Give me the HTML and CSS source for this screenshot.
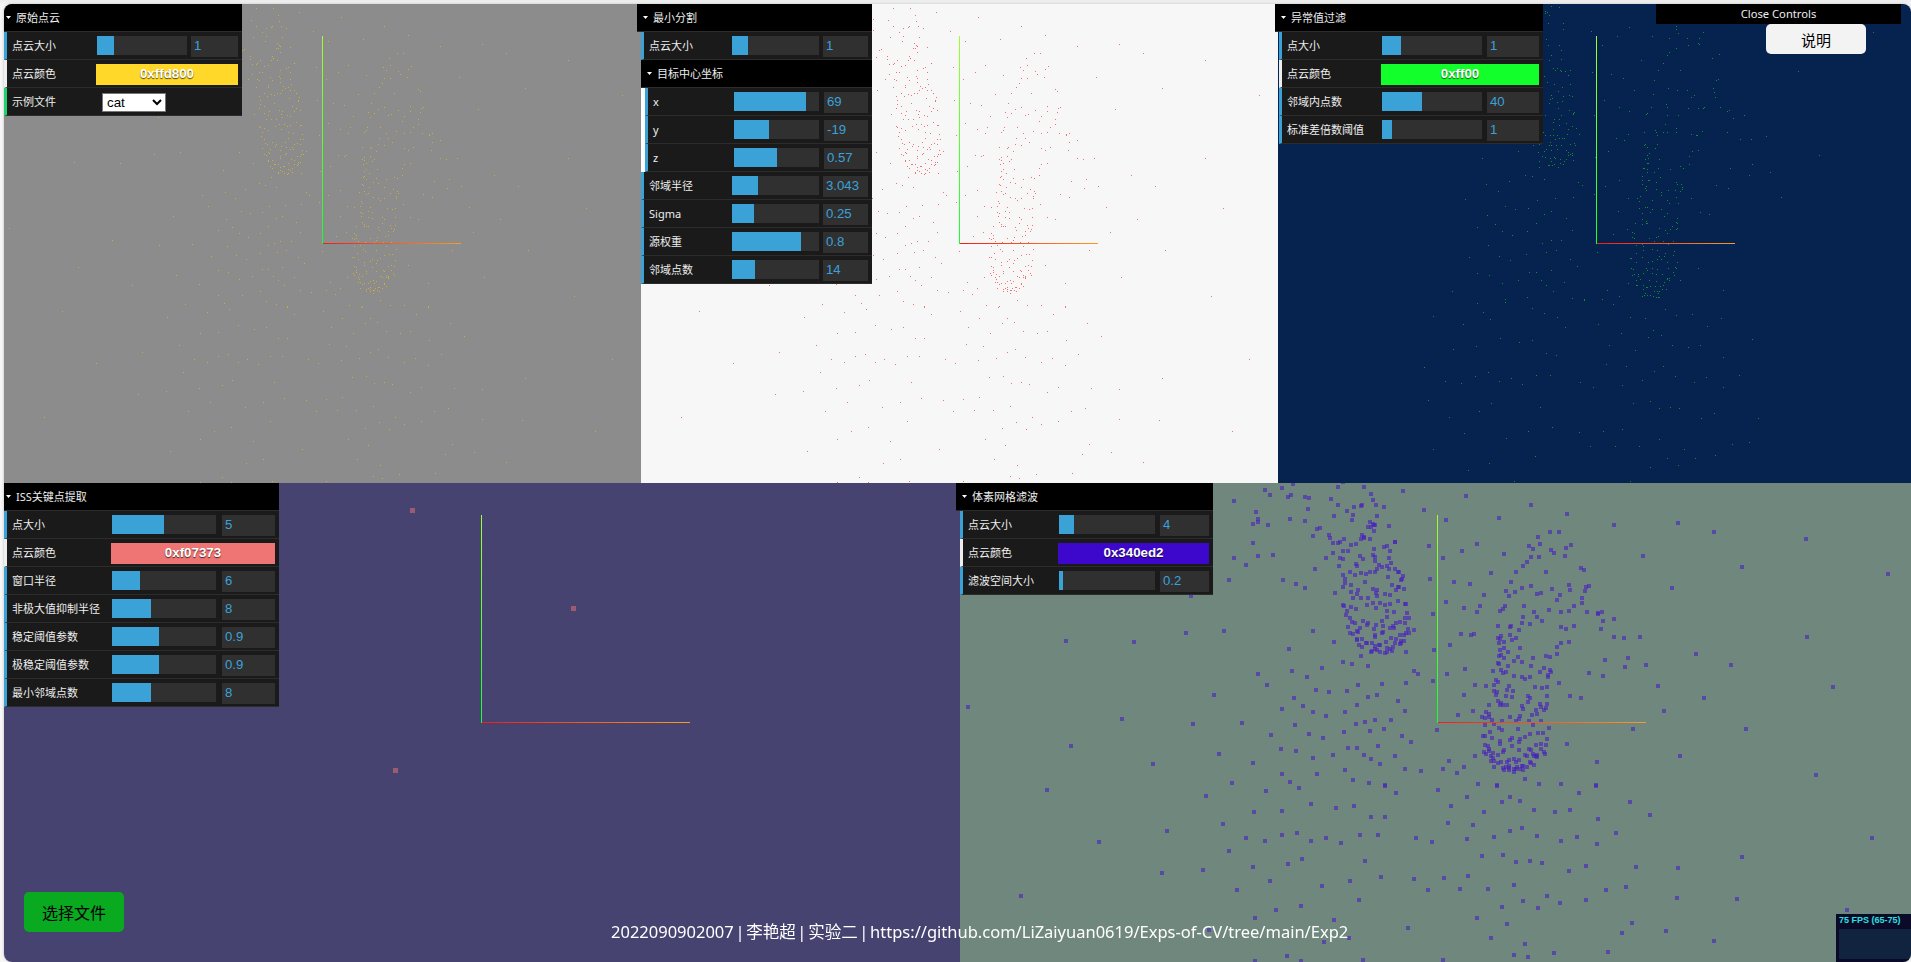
FILE: index.html
```html
<!DOCTYPE html>
<html lang="zh-CN">
<head>
<meta charset="utf-8">
<title>点云处理</title>
<link rel="stylesheet" href="styles.css">
</head>
<body>
<main class="stage">
  <div class="views top">
    <section class="view view-origin">
      <canvas id="origin" width="637" height="479"></canvas>
      <div class="gui gui-origin">
        <h2 class="title">原始点云</h2>
        <ul class="rows">
          <li class="row"><span class="name">点云大小</span><div class="slider"><div class="fill" style="width:18.9%"></div></div><span class="value">1</span></li>
          <li class="row color"><span class="name">点云颜色</span><span class="swatch yellow">0xffd800</span></li>
          <li class="row option"><span class="name">示例文件</span><select class="select"><option>cat</option></select></li>
        </ul>
      </div>
    </section>
    <section class="view view-cut">
      <canvas id="cut" width="637" height="479"></canvas>
      <div class="gui gui-cut">
        <h2 class="title">最小分割</h2>
        <ul class="rows">
          <li class="row"><span class="name">点云大小</span><div class="slider"><div class="fill" style="width:18.4%"></div></div><span class="value">1</span></li>
          <li class="folder">
            <h3 class="title sub">目标中心坐标</h3>
            <ul class="nested">
              <li class="row"><span class="name">x</span><div class="slider"><div class="fill" style="width:84.5%"></div></div><span class="value">69</span></li>
              <li class="row"><span class="name">y</span><div class="slider"><div class="fill" style="width:41%"></div></div><span class="value">-19</span></li>
              <li class="row"><span class="name">z</span><div class="slider"><div class="fill" style="width:50.5%"></div></div><span class="value">0.57</span></li>
            </ul>
          </li>
          <li class="row"><span class="name">邻域半径</span><div class="slider"><div class="fill" style="width:30.4%"></div></div><span class="value">3.043</span></li>
          <li class="row"><span class="name">Sigma</span><div class="slider"><div class="fill" style="width:25.2%"></div></div><span class="value">0.25</span></li>
          <li class="row"><span class="name">源权重</span><div class="slider"><div class="fill" style="width:79.3%"></div></div><span class="value">0.8</span></li>
          <li class="row"><span class="name">邻域点数</span><div class="slider"><div class="fill" style="width:26.5%"></div></div><span class="value">14</span></li>
        </ul>
      </div>
    </section>
    <section class="view view-outlier">
      <canvas id="outlier" width="637" height="479"></canvas>
      <div class="gui gui-outlier">
        <h2 class="title">异常值过滤</h2>
        <ul class="rows">
          <li class="row"><span class="name">点大小</span><div class="slider"><div class="fill" style="width:19%"></div></div><span class="value">1</span></li>
          <li class="row color"><span class="name">点云颜色</span><span class="swatch green">0xff00</span></li>
          <li class="row"><span class="name">邻域内点数</span><div class="slider"><div class="fill" style="width:40%"></div></div><span class="value">40</span></li>
          <li class="row"><span class="name">标准差倍数阈值</span><div class="slider"><div class="fill" style="width:10%"></div></div><span class="value">1</span></li>
        </ul>
      </div>
    </section>
  </div>
  <div class="views bottom">
    <section class="view view-iss">
      <canvas id="iss" width="956" height="479"></canvas>
      <div class="gui gui-iss">
        <h2 class="title">ISS关键点提取</h2>
        <ul class="rows">
          <li class="row"><span class="name">点大小</span><div class="slider"><div class="fill" style="width:50%"></div></div><span class="value">5</span></li>
          <li class="row color"><span class="name">点云颜色</span><span class="swatch pink">0xf07373</span></li>
          <li class="row"><span class="name">窗口半径</span><div class="slider"><div class="fill" style="width:27%"></div></div><span class="value">6</span></li>
          <li class="row"><span class="name">非极大值抑制半径</span><div class="slider"><div class="fill" style="width:37.5%"></div></div><span class="value">8</span></li>
          <li class="row"><span class="name">稳定阈值参数</span><div class="slider"><div class="fill" style="width:45.2%"></div></div><span class="value">0.9</span></li>
          <li class="row"><span class="name">极稳定阈值参数</span><div class="slider"><div class="fill" style="width:45.2%"></div></div><span class="value">0.9</span></li>
          <li class="row"><span class="name">最小邻域点数</span><div class="slider"><div class="fill" style="width:37.5%"></div></div><span class="value">8</span></li>
        </ul>
      </div>
    </section>
    <section class="view view-voxel">
      <canvas id="voxel" width="956" height="479"></canvas>
      <div class="gui gui-voxel">
        <h2 class="title">体素网格滤波</h2>
        <ul class="rows">
          <li class="row"><span class="name">点云大小</span><div class="slider"><div class="fill" style="width:15.6%"></div></div><span class="value">4</span></li>
          <li class="row color"><span class="name">点云颜色</span><span class="swatch violet">0x340ed2</span></li>
          <li class="row"><span class="name">滤波空间大小</span><div class="slider"><div class="fill" style="width:4.2%"></div></div><span class="value">0.2</span></li>
        </ul>
      </div>
    </section>
  </div>
  <div class="close-controls">Close Controls</div>
  <button class="help">说明</button>
  <button class="pick">选择文件</button>
  <p class="credit">2022090902007 | 李艳超 | 实验二 | https://github.com/LiZaiyuan0619/Exps-of-CV/tree/main/Exp2</p>
  <div class="stats"><div class="fps">75 FPS (65-75)</div><div class="graph"></div></div>
</main>
<script src="clouds.js"></script>
</body>
</html>
```
FILE: styles.css
```css
* { box-sizing: border-box; }

body {
  margin: 0;
  width: 1911px;
  height: 962px;
  padding: 4px 0 0 4px;
  overflow: hidden;
  background: #f7f7f7 linear-gradient(#ececec, #f5f5f5) 0 0 / 100% 4px no-repeat;
  font-family: "Noto Sans", "Noto Sans CJK SC", sans-serif;
}

h2, h3, ul, p { margin: 0; padding: 0; font-weight: 400; }
ul { list-style: none; }

.stage {
  position: relative;
  width: 1907px;
  height: 958px;
  overflow: hidden;
  border-radius: 8px;
  box-shadow: 0 0 3px rgba(0, 0, 0, .25);
}

.views { display: flex; height: 479px; }
.view { position: relative; flex: none; height: 479px; }
.view canvas { display: block; }
.top .view { width: 637px; }
.bottom .view { width: 956px; }

.view-origin { background: #8c8c8c; }
.view-cut { background: #f7f7f7; }
.view-outlier { background: #06224f; }
.view-iss { background: #474370; }
.view-voxel { background: #70877e; }

/* control panels */
.gui {
  position: absolute;
  top: 0;
  left: -4px;
  z-index: 1;
  font-size: 11px;
  line-height: 27px;
  color: #eee;
}

.gui-origin { width: 242px; --name: 85px; --slider: 90px; --gap: 4px; }
.gui-cut { width: 235px; --name: 83px; --slider: 87px; --gap: 4px; }
.gui-outlier { left: -3px; width: 268px; --name: 95px; --slider: 100px; --gap: 5px; }
.gui-iss { width: 279px; --name: 100px; --slider: 104px; --gap: 6px; }
.gui-voxel { width: 257px; --name: 91px; --slider: 96px; --gap: 5px; }

.title {
  height: 28px;
  padding-left: 16px;
  border-bottom: 1px solid #2c2c2c;
  background: #000 url("data:image/svg+xml,%3Csvg xmlns='http://www.w3.org/2000/svg' width='5' height='3'%3E%3Cpath d='M0 0h5L2.5 3z' fill='%23fff'/%3E%3C/svg%3E") 6px 12px no-repeat;
  font-size: 11px;
  line-height: 27px;
  white-space: nowrap;
}

.rows { margin-left: 4px; }

.row {
  display: flex;
  height: 28px;
  padding: 0 4px 0 5px;
  border-left: 3px solid #3ba2d8;
  border-bottom: 1px solid #2c2c2c;
  background: #1a1a1a;
}

.row.color { border-left-color: #eee; }
.row.option { border-left-color: #1ed36f; }

.name { flex: none; width: var(--name); white-space: nowrap; }

.slider {
  flex: none;
  width: var(--slider);
  height: 19px;
  margin: 4px var(--gap) 0 0;
  background: #303030;
}

.fill { height: 100%; background: #3ba2d8; }

.value {
  flex: 1;
  height: 21px;
  margin-top: 4px;
  padding-left: 3px;
  background: #303030;
  color: #3ba2d8;
  font: 13.2px/20px "Liberation Sans", sans-serif;
}

.swatch {
  flex: 1;
  height: 21px;
  margin: 4px 0 0 -1px;
  color: #fff;
  font: bold 13.33px/20px "Liberation Sans", sans-serif;
  text-align: center;
  text-shadow: 0 1px 1px rgba(0, 0, 0, .7);
}

.yellow { background: #ffd829; }
.green { background: #13ff2b; }
.pink { background: #ef7474; }
.violet { background: #3d08cb; }

.select {
  width: 64px;
  height: 19px;
  margin: 5px 0 0 5px;
  padding: 0;
  border: 1px solid #767676;
  border-radius: 0;
  background: #fff;
  color: #000;
  font: 13.33px "Liberation Sans", sans-serif;
}

.title.sub { background-position: 6px 12px; }
.nested { border-left: 4px solid #fff; --name: 81px; --slider: 85px; --gap: 5px; }

/* floating controls */
.close-controls {
  position: absolute;
  top: 0;
  left: 1652px;
  width: 245px;
  height: 20px;
  background: #000;
  color: #eee;
  font-size: 11.2px;
  line-height: 20px;
  text-align: center;
}

.help, .pick {
  position: absolute;
  width: 100px;
  padding: 0;
  border: 0;
  border-radius: 5px;
  color: #000;
  font-family: "Noto Sans CJK SC", sans-serif;
}

.help { top: 20px; left: 1762px; height: 30px; background: #f3f3f3; font-size: 15px; }
.pick { top: 888px; left: 20px; height: 40px; background: #09a920; font-size: 16px; }

.credit {
  position: absolute;
  left: 607px;
  top: 916px;
  color: #fff;
  font-size: 16.5px;
  line-height: 24px;
  word-spacing: -2.6px;
  white-space: nowrap;
}

.stats {
  position: absolute;
  top: 910px;
  left: 1832px;
  width: 80px;
  height: 48px;
  padding: 0 3px;
  background: #0b0b29;
}

.fps {
  height: 15px;
  color: #2be0e0;
  font: bold 9px/13px "Liberation Sans", sans-serif;
  white-space: nowrap;
}

.graph { height: 30px; background: #10243f; }
```
FILE: clouds.js
```js
// Each tile holds points in a local grid: [origin x, origin y, units per px in x, units per px in y, points].
const catTiles = [
  [950, 475, 3, 3, `945,45 960,60 996,39 1029,27 1023,60 1014,66 1065,66 1077,69 1164,36 1179,21 1242,36 1263,57 1269,75 1143,72 1164,90 1191,108 1212,96 1233,93 1236,90 1278,90 1302,96 852,78 918,111 924,132 924,141 909,147 954,150 1020,132 1074,102 1065,138 1101,162 1110,159 1089,183 1152,123 1209,120 1206,135 1281,123 1260,141 1254,156 1263,156 1269,147 1272,150 1275,150 1272,168 1317,153 1137,180 1140,189 1149,204 1164,204 1170,201 1182,192 1203,210 1218,207 1236,180 1242,186 1242,188 1233,192 1260,192 1335,201 1335,201 1302,216 1311,213 1320,228 1272,222 909,204 924,243 969,240 852,249 888,270 837,315 999,315 1038,327 1065,339 1095,282 1128,249 1149,234 1170,249 1179,252 1179,228 1194,228 1167,273 1230,243 1239,252 1269,240 1275,246 1275,258 1317,249 1323,264 1218,267 1221,273 1287,270 1296,276 1311,273 1317,282 1335,282 1281,282 1275,291 1260,291 1248,297 1233,294 1215,300 1200,291 1179,300 1185,312 1185,324 1179,336 1203,330 1245,321 1314,306 1347,291 1326,330 1338,345 1347,336 1269,342 1281,345 1278,354 1281,363 1305,357 1320,360 1224,345 1203,351 1221,357 1209,369 1233,369 1254,369 1155,354 1269,384 1290,384 1251,390 1278,399 1305,390 1320,387 1179,390 1182,393 1203,396 1191,408 1218,402 1188,420 1200,429 1311,408 1332,411 1311,426 1206,441 1215,444 1239,438 1251,450 1254,444 1278,450 1296,438 1299,453 1272,462 1320,459 1329,453 1332,459 1338,444 1194,456 1200,474 1209,477 1221,468 1224,471 1230,459 1296,474 1299,471 1275,480 1275,486 1221,492 1221,495 1236,492 1323,489 1338,492 1308,501 1335,504 1227,510 1236,516 1248,504 1251,504 1266,504 1275,513 1290,510 1287,510 1311,519 1329,516 1263,531 1266,528 1275,522 1281,525 1290,531 1305,534 1311,531 1320,522 1326,528 1233,543
  348,498 552,501 708,474 723,363 822,468 1017,522 1089,468 1152,501 1179,561 1206,567 1254,573 1026,588 1071,606 1116,579 924,597 951,630 1098,645 1137,651 1191,648 1224,630 1296,627 1254,666 1281,660 1344,678 792,660 1032,669 996,702 1059,693 1089,711 1128,723 1185,711 1221,690 54,696 516,732 729,747 876,744 963,780 1035,750 1077,777 1119,789 1182,771 1218,747 1245,741 1275,735 1323,735 1260,768 1302,762 363,813 609,867 807,837 909,864 993,822 1038,828 1089,849 1149,840 1194,819 1221,819 1242,840 1263,852 1284,813 1335,843 1290,867 846,924 996,897 1020,921 1101,897 1185,885 1209,915 1257,924 1305,931`],
  [1400, 475, 3, 3, `9,48 72,105 138,135 198,63 297,129 393,90 501,117 642,150 834,144 942,171 1218,192 1464,297 1026,276 729,243 816,339 888,537 993,570 1221,486 1299,636 912,669 774,633 792,708 1038,762 840,843 1248,900 699,762 738,570 684,549 675,576 615,555 609,603 567,594 543,669 510,663 720,486 672,489 642,486 642,432 609,438 603,462 606,411 594,414 594,417 561,411 546,384 546,369 555,348 558,336 567,333 552,285 543,279 495,243 498,219 513,210 462,234 453,225 450,171 477,171 414,186 420,207 387,213 399,222 393,246 417,246 381,261 369,273 348,291 438,291 333,321 312,237 273,294 231,207 186,228 129,249 87,213 90,312 162,321 210,327 252,360 138,381 192,399 240,393 231,411 99,417 183,477 213,480 222,477 150,510 102,525 195,582 141,597 99,618 225,630 258,633 192,660 219,708 174,720 111,765 42,465 42,588 54,597 18,624 18,531 15,708 6,783 33,801 15,882 63,888 129,882 147,858 171,894 192,876 225,843 234,927 -6,291 9,303 3,315 6,312 -6,336 12,342 -6,378 15,387 18,387 21,414 15,429 27,429 0,441 15,444 24,462 18,474 27,474 12,480 0,480 12,498 3,504 0,507 3,498
  318,348 327,363 345,351 366,339 393,333 411,357 423,354 456,342 480,360 471,375 507,330 510,345 372,393 402,411 411,426 426,438 447,405 483,411 507,408 522,393 315,393 309,402 300,408 369,426 366,444 390,447 294,453 330,456 333,453 357,465 522,453 483,456 498,462 330,480 303,483 294,489 300,492 297,504 312,501 336,495 348,489 483,504 507,501 471,516 360,519 312,519 300,525 324,531 471,537 438,543 450,546 297,543 303,540 312,549 354,546 342,558 366,561 399,549 294,564 297,567 324,573 393,573 432,579 450,585 453,591 420,591 279,588 303,585 309,594 318,591 444,600 444,606 342,603 366,606 375,612 390,606 288,615 294,621 477,624 282,630 327,633 405,636 426,639 441,636 282,648 291,651 288,660 321,645 339,648 318,663 336,666 384,663 390,669 384,681 441,663 294,678 303,684 300,690 309,690 321,690 267,690 420,687 423,696 441,687 438,699 432,705 408,705 411,717 366,693 369,702 396,720 258,711 267,717 267,726 246,726 255,729 276,735 330,726 306,738 348,738 357,732 360,723 387,738 423,738
  255,750 282,747 297,759 306,765 399,750 354,762 447,759 270,771 414,774 429,774 390,777 249,783 255,783 276,789 375,786 360,792 357,801 336,789 330,795 300,798 300,807 441,792 438,810 423,807 408,810 423,822 336,813 357,825 255,810 264,813 267,822 267,828 252,831 258,837 312,825 309,831 279,834 273,843 279,849 294,840 387,822 393,825 399,837 432,831 435,837 375,840 381,843 402,843 408,843 411,840 411,846 327,855 342,852 357,855 348,861 321,861 303,861 294,864 273,858 282,858 390,861 393,864 402,870 282,876 318,876 327,873 327,879 309,879 312,885 327,885 342,882 351,876 360,882 369,873 366,873 369,885 381,876 348,882 342,891 375,912 417,927 483,927 291,931 588,931 501,807 591,861`],
  [950, 740, 1.6316, 3, `158,150 417,168 515,153 569,144 727,159 709,138 797,150 844,171 892,138 913,171 900,186 930,183 1026,159 1054,138 1109,186 1142,225 589,192 630,204 659,198 817,198 872,216 953,210 987,216 1011,210 496,216 542,213 687,231 710,231 445,252 354,273 243,306 483,294 514,303 542,285 566,279 589,303 613,294 638,309 669,285 698,285 812,249 853,255 760,294 786,306 843,297 887,291 913,273 933,264 958,288 997,303 1023,291 1055,312 1057,237 1086,279 1504,294 1292,351 455,333 677,363 575,357 551,372 494,381 413,390 346,399 522,423 468,450 116,468 607,438 652,423 703,411 757,417 780,450 806,414 832,447 845,408 868,348 902,345 923,366 946,363 966,369 878,447 920,435 974,468 935,483 900,501 959,504 995,489 1010,393 1037,378 1119,381 1188,384 1103,441 1070,450 1037,480 1186,474 1284,477 1463,510 667,480 572,498 532,510 497,534 626,540 747,564 860,534 909,552 1113,549 1096,579 1168,573 1246,603 423,570 651,594 610,606 882,594 938,612 920,645 943,651 985,639 1073,636 550,648 497,664 572,664 674,661 804,661`]
];

const filteredTiles = [
  [1400, 0, 3, 3, `454,18 478,21 436,33 436,40 442,38 448,45 445,70 490,70 490,87 574,94 439,118 445,136 478,136 484,151 454,166 448,181 484,178 460,205 466,211 472,205 481,211 484,214 496,214 511,211 505,226 433,229 442,247 463,253 511,253 487,262 475,274 454,286 457,295 451,298 490,289 508,286 517,289 448,310 472,307 487,304 475,325 508,331 523,337 520,340 520,343 436,346 484,346 463,358 478,358 460,367 478,376 499,370 517,379 529,385 505,388 460,388 538,403 502,403 430,397 436,406 451,406 460,406 472,406 478,415 487,415 493,415 466,418 451,427 454,436 400,436 418,433 448,436 469,436 484,436 511,433 523,430 526,436 472,448 454,451 439,448 499,451 505,457 415,457 433,454 505,466 511,463 517,460 517,466 427,469 436,472 451,475 463,472 466,475 418,484 454,484 481,478 499,478 520,481 493,484 481,490 490,493 463,493 457,496 445,496 448,496 475,502 418,502
  607,136 652,109 688,82 757,109 829,79 829,87 835,100 808,115 862,115 898,115 910,97 865,136 895,130 898,133 829,145 808,157 802,166 790,190 841,211 958,163 937,175 724,181 634,223 670,235 577,217 763,241 774,211 955,238 949,241 940,265 943,277 946,292 703,271 613,301 583,346 805,265 832,271 862,271 883,286 874,292 760,283 799,313 802,322 754,322 658,322 688,334 742,340 739,343 802,346 835,346 865,325 895,325 910,325 913,322 961,322 982,334 988,331 1000,355 1033,346 796,373 829,385 829,397 766,391 769,397 790,397 802,397 733,397 685,403 649,415 673,421 625,454 586,472 772,406 892,406 907,394 874,403 889,406 982,397 1021,418 1054,418 1099,409 736,433 733,436 742,442 772,433 766,445 748,460 742,466 736,478 745,475 778,478 742,490 745,490 742,508 742,517 733,505 730,505 775,505 811,508 850,505 841,499 868,493 868,469 877,454 895,451 991,505 1057,493 1048,526 1111,517 1144,592 1258,466 1195,214 1420,97 763,517 781,532 727,529 727,541 745,541 748,541 769,547 739,559 727,553 736,565 739,571 769,568 805,571 784,577 784,586 829,547 832,553 844,553 847,562 847,568 841,574 826,571 829,592 874,595 901,637 928,643 985,565 949,556 721,589 712,595 718,604 757,601 802,601 808,610 835,610 718,625 736,622 742,622 751,637 757,628 784,628 802,640 727,640 727,658 739,664 742,670 739,670 706,670 727,673 793,649 832,655 829,667 832,670 817,679 832,685 829,688 811,688 796,691 778,685 802,700 775,709 769,712 763,724 748,715 790,724 820,724 682,688 697,697 703,700 697,712 703,715 709,736 727,733 730,739 730,751 757,748 772,751 805,733 823,754 796,760 793,769 820,766 709,760 691,775 694,775 727,772 778,769 772,778 784,778 832,787 745,787 757,784 709,787 802,787 826,802 829,805 805,805 739,805 757,805 742,811 694,805 700,808 772,808 730,820 757,820 697,826 703,823 715,823 715,829 769,823 787,823 820,817 823,826 802,835 808,835 808,841 802,838 841,841 709,841 721,838 748,841 769,844 793,847 685,850 709,856 712,856 730,856 739,862 742,862 751,859 766,859 781,859 790,856 730,868 787,868 799,868 763,874 772,874 778,874 775,880 736,880 727,889 733,886 742,886 751,886 760,889 769,892 775,892 778,892 895,805 970,871
  247,475 355,454 376,526 397,529 433,538 328,544 259,553 295,574 196,598 316,619 346,628 385,625 412,601 466,595 520,592 535,547 547,556 583,583 616,559 658,541 685,595 655,634 640,703 592,757 433,643 454,634 499,655 409,670 262,646 286,673 232,682 307,694 337,706 382,694 427,730 454,721 484,721 517,691 265,736 298,769 331,781 379,763 439,757 469,751 511,778 532,799 208,772 232,820 268,826 307,850 355,841 388,817 409,817 454,811 424,841 439,856 493,847 460,874 382,892 157,874 316,898 517,895 553,898 607,898 622,871 658,889`],
  [1278, 300, 3, 3, `598,10 682,7 616,37 637,58 763,25 799,40 838,52 862,82 919,1 1006,13 1057,52 1102,55 1162,28 1195,46 1243,43 1330,55 1288,79 466,49 556,73 667,115 724,127 763,121 595,139 526,148 805,160 835,166 961,73 1030,100 994,136 1072,151 1126,91 1111,112 1150,106 1183,136 1231,142 1267,136 1336,172 1423,118 439,202 502,244 550,250 592,229 631,217 664,244 700,235 733,253 775,226 817,226 907,247 946,262 985,193 1045,199 1033,256 1093,241 1129,214 1156,199 1192,229 1249,247 1285,232 1384,226 1336,262 451,301 514,352 559,400 604,334 640,310 787,322 823,382 751,394 685,415 772,469 634,490 571,511 466,448 709,544 904,397 937,439 976,394 1033,388 1012,439 1084,439 1066,310 1117,304 1144,325 1177,322 1204,325 1270,355 1309,340 1441,355 1144,418 1219,448 1168,475 1201,496 1252,475 1312,466 1363,433 1414,427 1117,502 1057,544`]
];

function unpack(tiles, cx, cy) {
  return tiles.flatMap(([ox, oy, sx, sy, text]) =>
    text.trim().split(/\s+/).map(pair => {
      const [x, y] = pair.split(",").map(Number);
      return [ox + x / sx - cx, oy + y / sy - cy];
    }));
}

function drawView(id, points, { color, size, center, axis, stretch = 1 }) {
  const ctx = document.getElementById(id).getContext("2d");
  const [cx, cy] = center;
  ctx.fillStyle = color;
  for (const [x, y] of points) {
    ctx.fillRect(Math.round(cx + 0.5 + x * stretch - size / 2), Math.round(cy + 0.5 + y - size / 2), size, size);
  }
  const up = ctx.createLinearGradient(0, cy, 0, cy - 208);
  up.addColorStop(0, "#14ff32");
  up.addColorStop(1, "#a0ff32");
  ctx.fillStyle = up;
  ctx.fillRect(cx, cy - 207, 1, 208);
  const right = ctx.createLinearGradient(cx, 0, cx + axis, 0);
  right.addColorStop(0, "#f51a1a");
  right.addColorStop(1, "#f79a28");
  ctx.fillStyle = right;
  ctx.fillRect(cx + 1, cy, axis, 1);
}

const cat = unpack(catTiles, 1437.5, 722.5);
const filtered = unpack(filteredTiles, 1596.5, 243.5);
const keyPoints = [[-69, -212], [92, -114], [-86, 48]];

drawView("origin", cat, { color: "rgba(222,184,36,.75)", size: 1, center: [318, 239], axis: 138, stretch: 2 / 3 });
drawView("cut", cat, { color: "rgba(240,90,90,.85)", size: 1, center: [318, 239], axis: 138, stretch: 2 / 3 });
drawView("outlier", filtered, { color: "#0f8f28", size: 1, center: [318, 239], axis: 138 });
drawView("iss", keyPoints, { color: "rgba(240,115,115,.5)", size: 5, center: [477, 239], axis: 208 });
drawView("voxel", cat, { color: "rgba(70,30,192,.58)", size: 4, center: [477, 239], axis: 208 });
```
